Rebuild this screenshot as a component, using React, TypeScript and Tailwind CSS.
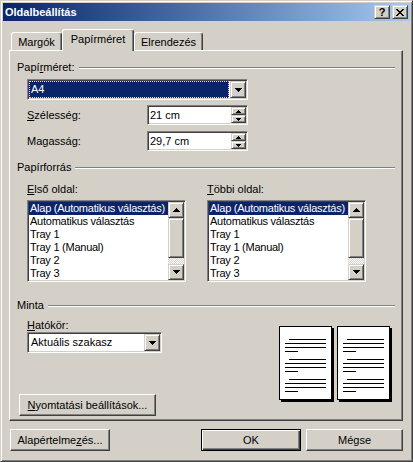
import React from 'react';

const raised =
  'border border-t-[#d4d0c8] border-l-[#d4d0c8] border-r-[#404040] border-b-[#404040] shadow-[inset_1px_1px_#fff,inset_-1px_-1px_#808080] bg-[#d4d0c8]';
const pushButton =
  'border border-t-white border-l-white border-r-[#404040] border-b-[#404040] shadow-[inset_-1px_-1px_#808080] bg-[#d4d0c8]';
const defaultButton =
  'border border-black shadow-[inset_1px_1px_#fff,inset_-1px_-1px_#404040,inset_-2px_-2px_#808080] bg-[#d4d0c8]';
const sunken =
  'border border-t-[#808080] border-l-[#808080] border-r-white border-b-white shadow-[inset_1px_1px_#404040,inset_-1px_-1px_#d4d0c8] p-px';

// pixel triangle, size = width of the widest row
function Arrow({ dir, size }: { dir: 'up' | 'down'; size: number }) {
  const rows = (size + 1) / 2;
  const rects = [];
  for (let i = 0; i < rows; i++) {
    const y = dir === 'down' ? i : rows - 1 - i;
    rects.push(<rect key={i} x={i} y={y} width={size - i * 2} height={1} />);
  }
  return (
    <svg width={size} height={rows} shapeRendering="crispEdges" className="block fill-black">
      {rects}
    </svg>
  );
}

function CloseGlyph() {
  const px = [
    [0, 0, 2], [6, 0, 2],
    [1, 1, 2], [5, 1, 2],
    [2, 2, 4],
    [3, 3, 2],
    [2, 4, 4],
    [1, 5, 2], [5, 5, 2],
    [0, 6, 2], [6, 6, 2],
  ];
  return (
    <svg width="8" height="7" shapeRendering="crispEdges" className="block fill-black">
      {px.map(([x, y, w], i) => (
        <rect key={i} x={x} y={y} width={w} height={1} />
      ))}
    </svg>
  );
}

function GroupHeader({ children }: { children: React.ReactNode }) {
  return (
    <div className="flex items-center h-[13px] pl-[7px] pr-[7px]">
      <span className="whitespace-nowrap">{children}</span>
      <div className="flex-1 ml-[4px] h-[2px] border-t border-t-[#808080] border-b border-b-white" />
    </div>
  );
}

function Combo({ className, value, selected }: { className: string; value: string; selected?: boolean }) {
  return (
    <div className={`h-[21px] bg-white flex ${sunken} ${className}`}>
      {selected ? (
        <div className="flex-1 mr-px flex items-center pl-px bg-[#0a246a] text-white border border-dotted border-[#f5db95]">
          {value}
        </div>
      ) : (
        <div className="flex-1 flex items-center pl-[2px]">{value}</div>
      )}
      <div className={`w-[16px] flex items-center justify-center ${raised}`}>
        <Arrow dir="down" size={7} />
      </div>
    </div>
  );
}

function SpinBox({ value }: { value: string }) {
  return (
    <div className={`w-[101px] h-[20px] bg-white flex ${sunken}`}>
      <div className="flex-1 flex items-center pl-px">{value}</div>
      <div className="w-[15px] flex flex-col">
        <div className={`flex-1 flex items-center justify-center ${raised}`}>
          <Arrow dir="up" size={5} />
        </div>
        <div className={`flex-1 flex items-center justify-center ${raised}`}>
          <Arrow dir="down" size={5} />
        </div>
      </div>
    </div>
  );
}

function ScrollBar() {
  return (
    <div className="w-[16px] shrink-0 flex flex-col">
      <div className={`h-[16px] flex items-center justify-center ${raised}`}>
        <Arrow dir="up" size={7} />
      </div>
      <div className={`h-[40px] ${raised}`} />
      <div className="flex-1 bg-[image:repeating-conic-gradient(#d4d0c8_0_25%,#fff_0_50%)] bg-[length:2px_2px]" />
      <div className={`h-[16px] flex items-center justify-center ${raised}`}>
        <Arrow dir="down" size={7} />
      </div>
    </div>
  );
}

const trays = [
  'Alap (Automatikus választás)',
  'Automatikus választás',
  'Tray 1',
  'Tray 1 (Manual)',
  'Tray 2',
  'Tray 3',
];

function ListBox() {
  return (
    <div className={`w-[159px] h-[82px] bg-white flex overflow-hidden ${sunken}`}>
      <div className="flex-1 min-w-0 overflow-hidden">
        {trays.map((t, i) => (
          <div
            key={t}
            className={`h-[13px] leading-[13px] pl-px whitespace-nowrap tracking-[-0.25px] ${i === 0 ? 'bg-[#0a246a] text-white' : ''}`}
          >
            {t}
          </div>
        ))}
      </div>
      <ScrollBar />
    </div>
  );
}

function PagePreview() {
  const paras = [12, 32, 52];
  return (
    <div className="w-[53px] h-[74px] bg-white border border-black shadow-[2px_2px_0_#000]">
      <svg width="51" height="72" shapeRendering="crispEdges" className="block fill-black">
        {paras.map((y) => (
          <g key={y}>
            <rect x={9} y={y} width={37} height={1} />
            <rect x={5} y={y + 4} width={41} height={1} />
            <rect x={5} y={y + 8} width={41} height={1} />
            <rect x={5} y={y + 12} width={13} height={1} />
          </g>
        ))}
      </svg>
    </div>
  );
}

const tabBase =
  'flex items-center justify-center border-l border-t border-r border-l-white border-t-white border-r-[#404040] shadow-[inset_-1px_0_#808080] rounded-tl-[3px] rounded-tr-[3px] bg-[#d4d0c8]';

export default function App() {
  return (
    <div className="w-[413px] h-[462px] bg-[#d4d0c8] border border-t-[#d4d0c8] border-l-[#d4d0c8] border-r-[#404040] border-b-[#404040] shadow-[inset_1px_1px_#fff,inset_-1px_-1px_#808080] p-[2px] flex flex-col font-['Liberation_Sans',Arial,sans-serif] text-[11px] leading-[13px] text-black select-none">
      {/* title bar */}
      <div className="h-[18px] shrink-0 flex items-center justify-between pl-[2px] pr-[2px] bg-linear-to-r from-[#0a246a] to-[#a6caf0]">
        <span className="font-bold text-white">Oldalbeállítás</span>
        <div className="flex gap-[2px]">
          <div className={`w-[16px] h-[14px] flex items-center justify-center font-bold leading-[12px] ${raised}`}>?</div>
          <div className={`w-[16px] h-[14px] flex items-center justify-center ${raised}`}>
            <CloseGlyph />
          </div>
        </div>
      </div>

      <div className="px-[6px]">
        {/* tabs */}
        <div className="mt-[8px] h-[21px] flex items-end pl-[2px]">
          <div className={`w-[51px] h-[18px] pt-px ${tabBase}`}>Margók</div>
          <div className={`w-[72px] h-[22px] -mb-px relative z-10 pb-[2px] ${tabBase}`}>Papírméret</div>
          <div className={`w-[69px] h-[18px] pt-px ${tabBase}`}>Elrendezés</div>
        </div>

        {/* tab page */}
        <div className="w-[394px] h-[371px] border border-t-white border-l-white border-r-[#404040] border-b-[#404040] shadow-[inset_-1px_-1px_#808080]">
          <div className="mt-[10px]">
            <GroupHeader>
              Papí<u>r</u>méret:
            </GroupHeader>
          </div>
          <div className="mt-[5px] pl-[17px]">
            <Combo className="w-[221px]" value="A4" selected />
          </div>
          <div className="mt-[5px] pl-[17px] flex items-center h-[20px]">
            <span className="w-[120px]">
              <u>S</u>zélesség:
            </span>
            <SpinBox value="21 cm" />
          </div>
          <div className="mt-[6px] pl-[17px] flex items-center h-[20px]">
            <span className="w-[120px]">
              Ma<u>g</u>asság:
            </span>
            <SpinBox value="29,7 cm" />
          </div>

          <div className="mt-[10px]">
            <GroupHeader>Papírforrás</GroupHeader>
          </div>
          <div className="mt-[9px] pl-[17px] flex gap-[21px]">
            <div className="w-[159px] flex flex-col gap-[4px]">
              <span className="h-[13px]">
                <u>E</u>lső oldal:
              </span>
              <ListBox />
            </div>
            <div className="w-[159px] flex flex-col gap-[4px]">
              <span className="h-[13px]">
                <u>T</u>öbbi oldal:
              </span>
              <ListBox />
            </div>
          </div>

          <div className="mt-[17px]">
            <GroupHeader>Minta</GroupHeader>
          </div>
          <div className="pl-[9px] flex">
            <div className="w-[260px] flex flex-col">
              <span className="mt-[7px] ml-[8px] h-[13px]">
                <u>H</u>atókör:
              </span>
              <div className="ml-[8px]">
                <Combo className="w-[135px]" value="Aktuális szakasz" />
              </div>
              <div className={`mt-[41px] w-[137px] h-[22px] flex items-center justify-center ${pushButton}`}>
                <span>
                  <u>N</u>yomtatási beállítások...
                </span>
              </div>
            </div>
            <div className="mt-[14px] flex gap-[5px]">
              <PagePreview />
              <PagePreview />
            </div>
          </div>
        </div>
      </div>

      {/* bottom buttons */}
      <div className="mt-[8px] flex pl-[7px] pr-[7px]">
        <div className={`w-[100px] h-[22px] flex items-center justify-center ${pushButton}`}>
          <span>
            Alapértelme<u>z</u>és...
          </span>
        </div>
        <div className={`ml-auto w-[100px] h-[22px] flex items-center justify-center ${defaultButton}`}>OK</div>
        <div className={`ml-[5px] w-[97px] h-[22px] flex items-center justify-center ${pushButton}`}>Mégse</div>
      </div>
    </div>
  );
}
